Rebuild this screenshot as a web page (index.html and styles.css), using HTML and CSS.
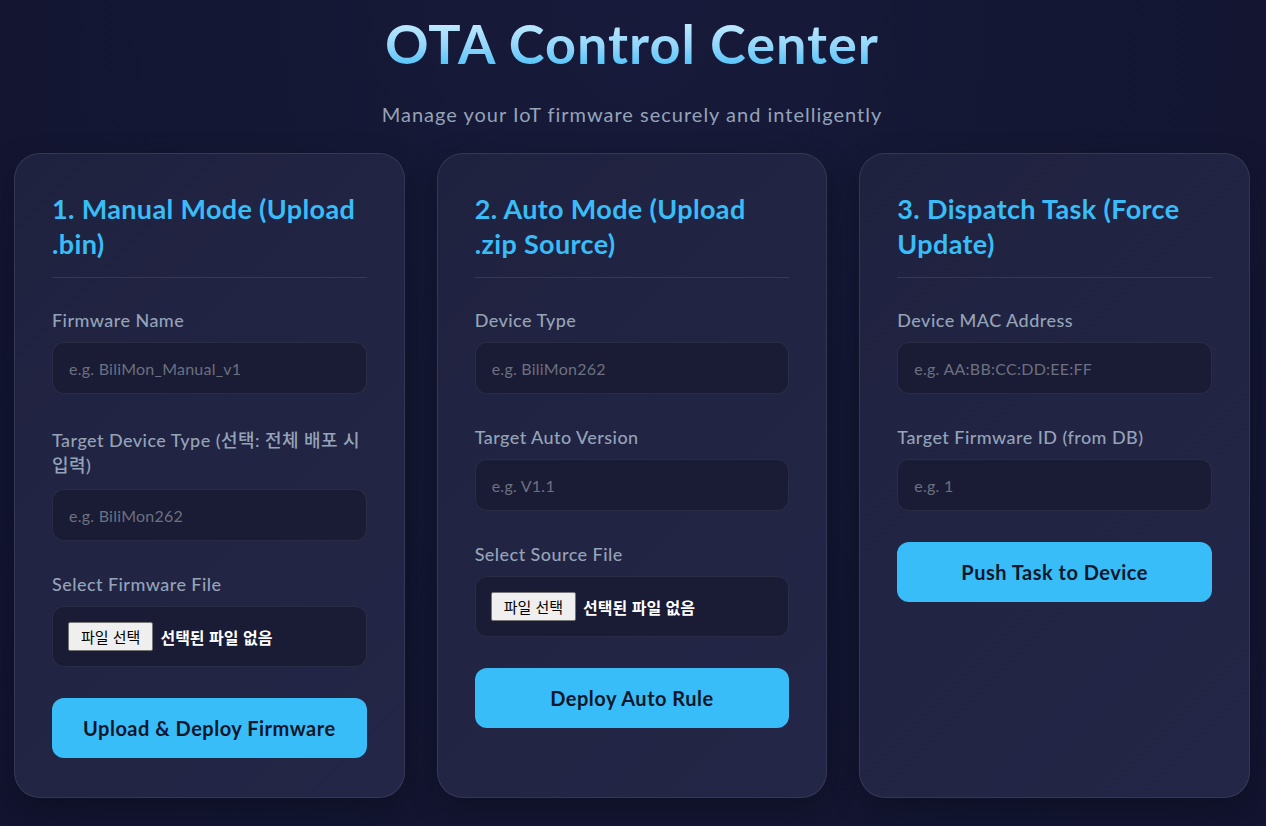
FILE: index.html
```html
<!DOCTYPE html>
<html lang="ko">
<head>
<meta charset="utf-8">
<title>OTA Control Center</title>
<link rel="stylesheet" href="styles.css">
</head>
<body>
<header class="hero">
  <h1 class="title">OTA Control Center</h1>
  <p class="subtitle">Manage your IoT firmware securely and intelligently</p>
</header>
<main class="grid">
  <section class="card">
    <h2 class="card-title">1. Manual Mode (Upload .bin)</h2>
    <div class="field">
      <label class="label">Firmware Name</label>
      <input class="input" type="text" placeholder="e.g. BiliMon_Manual_v1">
    </div>
    <div class="field">
      <label class="label label-ko">Target Device Type (선택: 전체 배포 시 입력)</label>
      <input class="input" type="text" placeholder="e.g. BiliMon262">
    </div>
    <div class="field">
      <label class="label">Select Firmware File</label>
      <div class="file">
        <span class="file-btn">파일 선택</span>
        <span class="file-text">선택된 파일 없음</span>
      </div>
    </div>
    <button class="btn">Upload &amp; Deploy Firmware</button>
  </section>
  <section class="card">
    <h2 class="card-title">2. Auto Mode (Upload .zip Source)</h2>
    <div class="field">
      <label class="label">Device Type</label>
      <input class="input" type="text" placeholder="e.g. BiliMon262">
    </div>
    <div class="field">
      <label class="label">Target Auto Version</label>
      <input class="input" type="text" placeholder="e.g. V1.1">
    </div>
    <div class="field">
      <label class="label">Select Source File</label>
      <div class="file">
        <span class="file-btn">파일 선택</span>
        <span class="file-text">선택된 파일 없음</span>
      </div>
    </div>
    <button class="btn">Deploy Auto Rule</button>
  </section>
  <section class="card">
    <h2 class="card-title">3. Dispatch Task (Force Update)</h2>
    <div class="field">
      <label class="label">Device MAC Address</label>
      <input class="input" type="text" placeholder="e.g. AA:BB:CC:DD:EE:FF">
    </div>
    <div class="field">
      <label class="label">Target Firmware ID (from DB)</label>
      <input class="input" type="text" placeholder="e.g. 1">
    </div>
    <button class="btn">Push Task to Device</button>
  </section>
</main>
</body>
</html>
```
FILE: styles.css
```css
* { box-sizing: border-box; }
html, body { height: 100%; }
body {
  margin: 0;
  padding: 0 16px 0 14px;
  font-family: Lato, "Noto Sans CJK KR", sans-serif;
  color: #e2e8f0;
  background: radial-gradient(ellipse at 50% 0%, #171a3a 0%, #141733 45%, #121430 100%);
  overflow: hidden;
}
.hero {
  text-align: center;
  padding-top: 11px;
}
.title {
  margin: 0;
  font-size: 54px;
  line-height: 66px;
  font-weight: 700;
  letter-spacing: 1px;
  background: linear-gradient(180deg, #cdeeff 10%, #8ed5fb 55%, #45c0f8 90%);
  -webkit-background-clip: text;
  background-clip: text;
  color: transparent;
  display: inline-block;
}
.subtitle {
  margin: 24px 0 0;
  font-size: 20px;
  line-height: 26px;
  letter-spacing: 1px;
  color: #94a3b8;
}
.grid {
  display: grid;
  grid-template-columns: repeat(3, 1fr);
  gap: 32px;
  margin-top: 26px;
}
.card {
  height: 645px;
  background: linear-gradient(135deg, #1f223f 0%, #242647 100%);
  border: 1px solid rgba(255,255,255,0.09);
  border-radius: 26px;
  padding: 37px 37px;
  box-shadow: 0 10px 30px rgba(0,0,0,0.25);
}
.card-title {
  margin: 0 0 30px;
  padding-bottom: 16px;
  border-bottom: 1px solid rgba(255,255,255,0.1);
  color: #38bdf8;
  font-size: 27px;
  line-height: 35px;
  font-weight: 700;
  letter-spacing: 0.35px;
}
.field { margin-bottom: 31px; }
.label {
  display: block;
  font-size: 18px;
  line-height: 25px;
  letter-spacing: 0.45px;
  color: #94a3b8;
  margin-bottom: 9px;
  font-weight: 500;
}
.label-ko { padding: 3px 0 2px; }
.input {
  display: block;
  width: 100%;
  height: 52px;
  background: #1a1b34;
  border: 1px solid rgba(255,255,255,0.08);
  border-radius: 12px;
  padding: 0 16px;
  font-family: inherit;
  font-size: 16px;
  letter-spacing: 0.25px;
  color: #e2e8f0;
  outline: none;
}
.input::placeholder { color: #6b7180; }
.file {
  height: 61px;
  background: #1a1b34;
  border: 1px solid rgba(255,255,255,0.08);
  border-radius: 12px;
  padding: 0 15px;
  display: flex;
  align-items: center;
  gap: 7px;
}
.file-btn {
  background: #efefef;
  color: #000;
  border: 1px solid #767676;
  border-radius: 2px;
  font-family: "Noto Sans CJK KR", sans-serif;
  font-size: 15px;
  line-height: 27px;
  padding: 0 12px;
}
.file-text {
  color: #fff;
  font-family: "Noto Sans CJK KR", sans-serif;
  font-size: 16px;
  font-weight: 700;
}
.btn {
  display: block;
  width: 100%;
  height: 60px;
  border: 0;
  border-radius: 12px;
  background: #38bdf8;
  color: #0f172a;
  font-family: inherit;
  font-size: 20px;
  letter-spacing: 0.5px;
  font-weight: 700;
  cursor: pointer;
}
```
